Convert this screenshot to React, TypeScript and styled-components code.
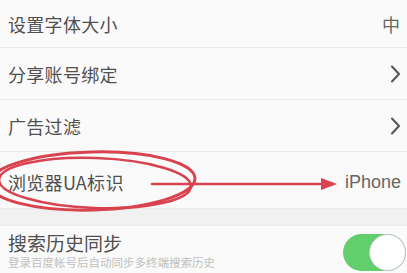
import styled, { createGlobalStyle } from "styled-components";

const GlobalStyle = createGlobalStyle`
  html, body {
    margin: 0;
    padding: 0;
    background: #f2f2f2;
  }
  body {
    font-family: "Noto Sans CJK SC", "Noto Sans", sans-serif;
    overflow: hidden;
  }
`;

const Page = styled.div`
  position: relative;
  width: 407px;
  height: 273px;
  overflow: hidden;
  background: #f2f2f2;
`;

const Group = styled.div`
  display: flex;
  flex-direction: column;
  background: #fafafa;
`;

const Row = styled.div<{ $h: number }>`
  display: flex;
  align-items: center;
  justify-content: space-between;
  height: ${(p) => p.$h}px;
  padding: 0 6px 0 8px;
  box-sizing: border-box;
  border-bottom: 1px solid #e9e9e9;

  &:last-child {
    border-bottom: none;
  }
`;

const Label = styled.span`
  font-size: 18px;
  color: #505050;
  letter-spacing: 0.3px;
`;

const Value = styled.span<{ $cjk?: boolean }>`
  font-size: 18px;
  color: #666;
  font-family: ${(p) =>
    p.$cjk ? `"Noto Sans CJK SC", sans-serif` : `"Liberation Sans", "Noto Sans CJK SC", sans-serif`};
`;

const Gap = styled.div`
  height: 16px;
  background: #f1f1f1;
  border-top: 1px solid #ececec;
  border-bottom: 1px solid #ececec;
`;

const SyncRow = styled.div`
  display: flex;
  align-items: center;
  justify-content: space-between;
  height: 50px;
  padding: 0 0 0 8px;
  background: #fafafa;
`;

const TextStack = styled.div`
  display: flex;
  flex-direction: column;
`;

const Title = styled.span`
  font-size: 19px;
  line-height: 22px;
  color: #505050;
`;

const Sub = styled.span`
  font-size: 11.5px;
  line-height: 16px;
  color: #c0c0c0;
`;

const Toggle = styled.div`
  position: relative;
  width: 63px;
  height: 37px;
  margin-right: 1px;
  margin-top: 2px;
  border-radius: 19px;
  background: #62cf6d;
`;

const Knob = styled.div`
  position: absolute;
  right: 0;
  top: 0;
  width: 35px;
  height: 35px;
  border-radius: 50%;
  background: #fff;
  border: 1px solid #c4c4c4;
`;

const Overlay = styled.svg`
  position: absolute;
  left: 0;
  top: 0;
  pointer-events: none;
`;

function Chevron() {
  return (
    <svg width="11" height="18" viewBox="0 0 11 18">
      <path d="M2 1.5 L9 9 L2 16.5" fill="none" stroke="#555" strokeWidth="2" strokeLinecap="round" strokeLinejoin="round" />
    </svg>
  );
}

export default function App() {
  return (
    <Page>
      <GlobalStyle />
      <Group>
        <Row $h={48}>
          <Label>设置字体大小</Label>
          <Value $cjk style={{ marginRight: 1 }}>中</Value>
        </Row>
        <Row $h={52}>
          <Label>分享账号绑定</Label>
          <Chevron />
        </Row>
        <Row $h={52}>
          <Label>广告过滤</Label>
          <Chevron />
        </Row>
        <Row $h={56}>
          <Label style={{ paddingTop: 4 }}>浏览器UA标识</Label>
          <Value style={{ paddingTop: 4 }}>iPhone</Value>
        </Row>
      </Group>
      <Gap />
      <SyncRow>
        <TextStack>
          <Title>搜索历史同步</Title>
          <Sub>登录百度帐号后自动同步多终端搜索历史</Sub>
        </TextStack>
        <Toggle>
          <Knob />
        </Toggle>
      </SyncRow>
      <Overlay width="407" height="273" viewBox="0 0 407 273">
        <g fill="none" stroke="#d9434f" strokeLinecap="round">
          <ellipse cx="92" cy="181" rx="103" ry="29" strokeWidth="3" transform="rotate(-1.5 92 181)" />
          <ellipse cx="95" cy="183" rx="96" ry="25" strokeWidth="2.5" transform="rotate(2 95 183)" />
        </g>
        <path d="M152 184 L326 184" stroke="#d9434f" strokeWidth="2.5" strokeLinecap="round" />
        <path d="M321 178 L337 184 L321 190 Z" fill="#d9434f" />
      </Overlay>
    </Page>
  );
}
